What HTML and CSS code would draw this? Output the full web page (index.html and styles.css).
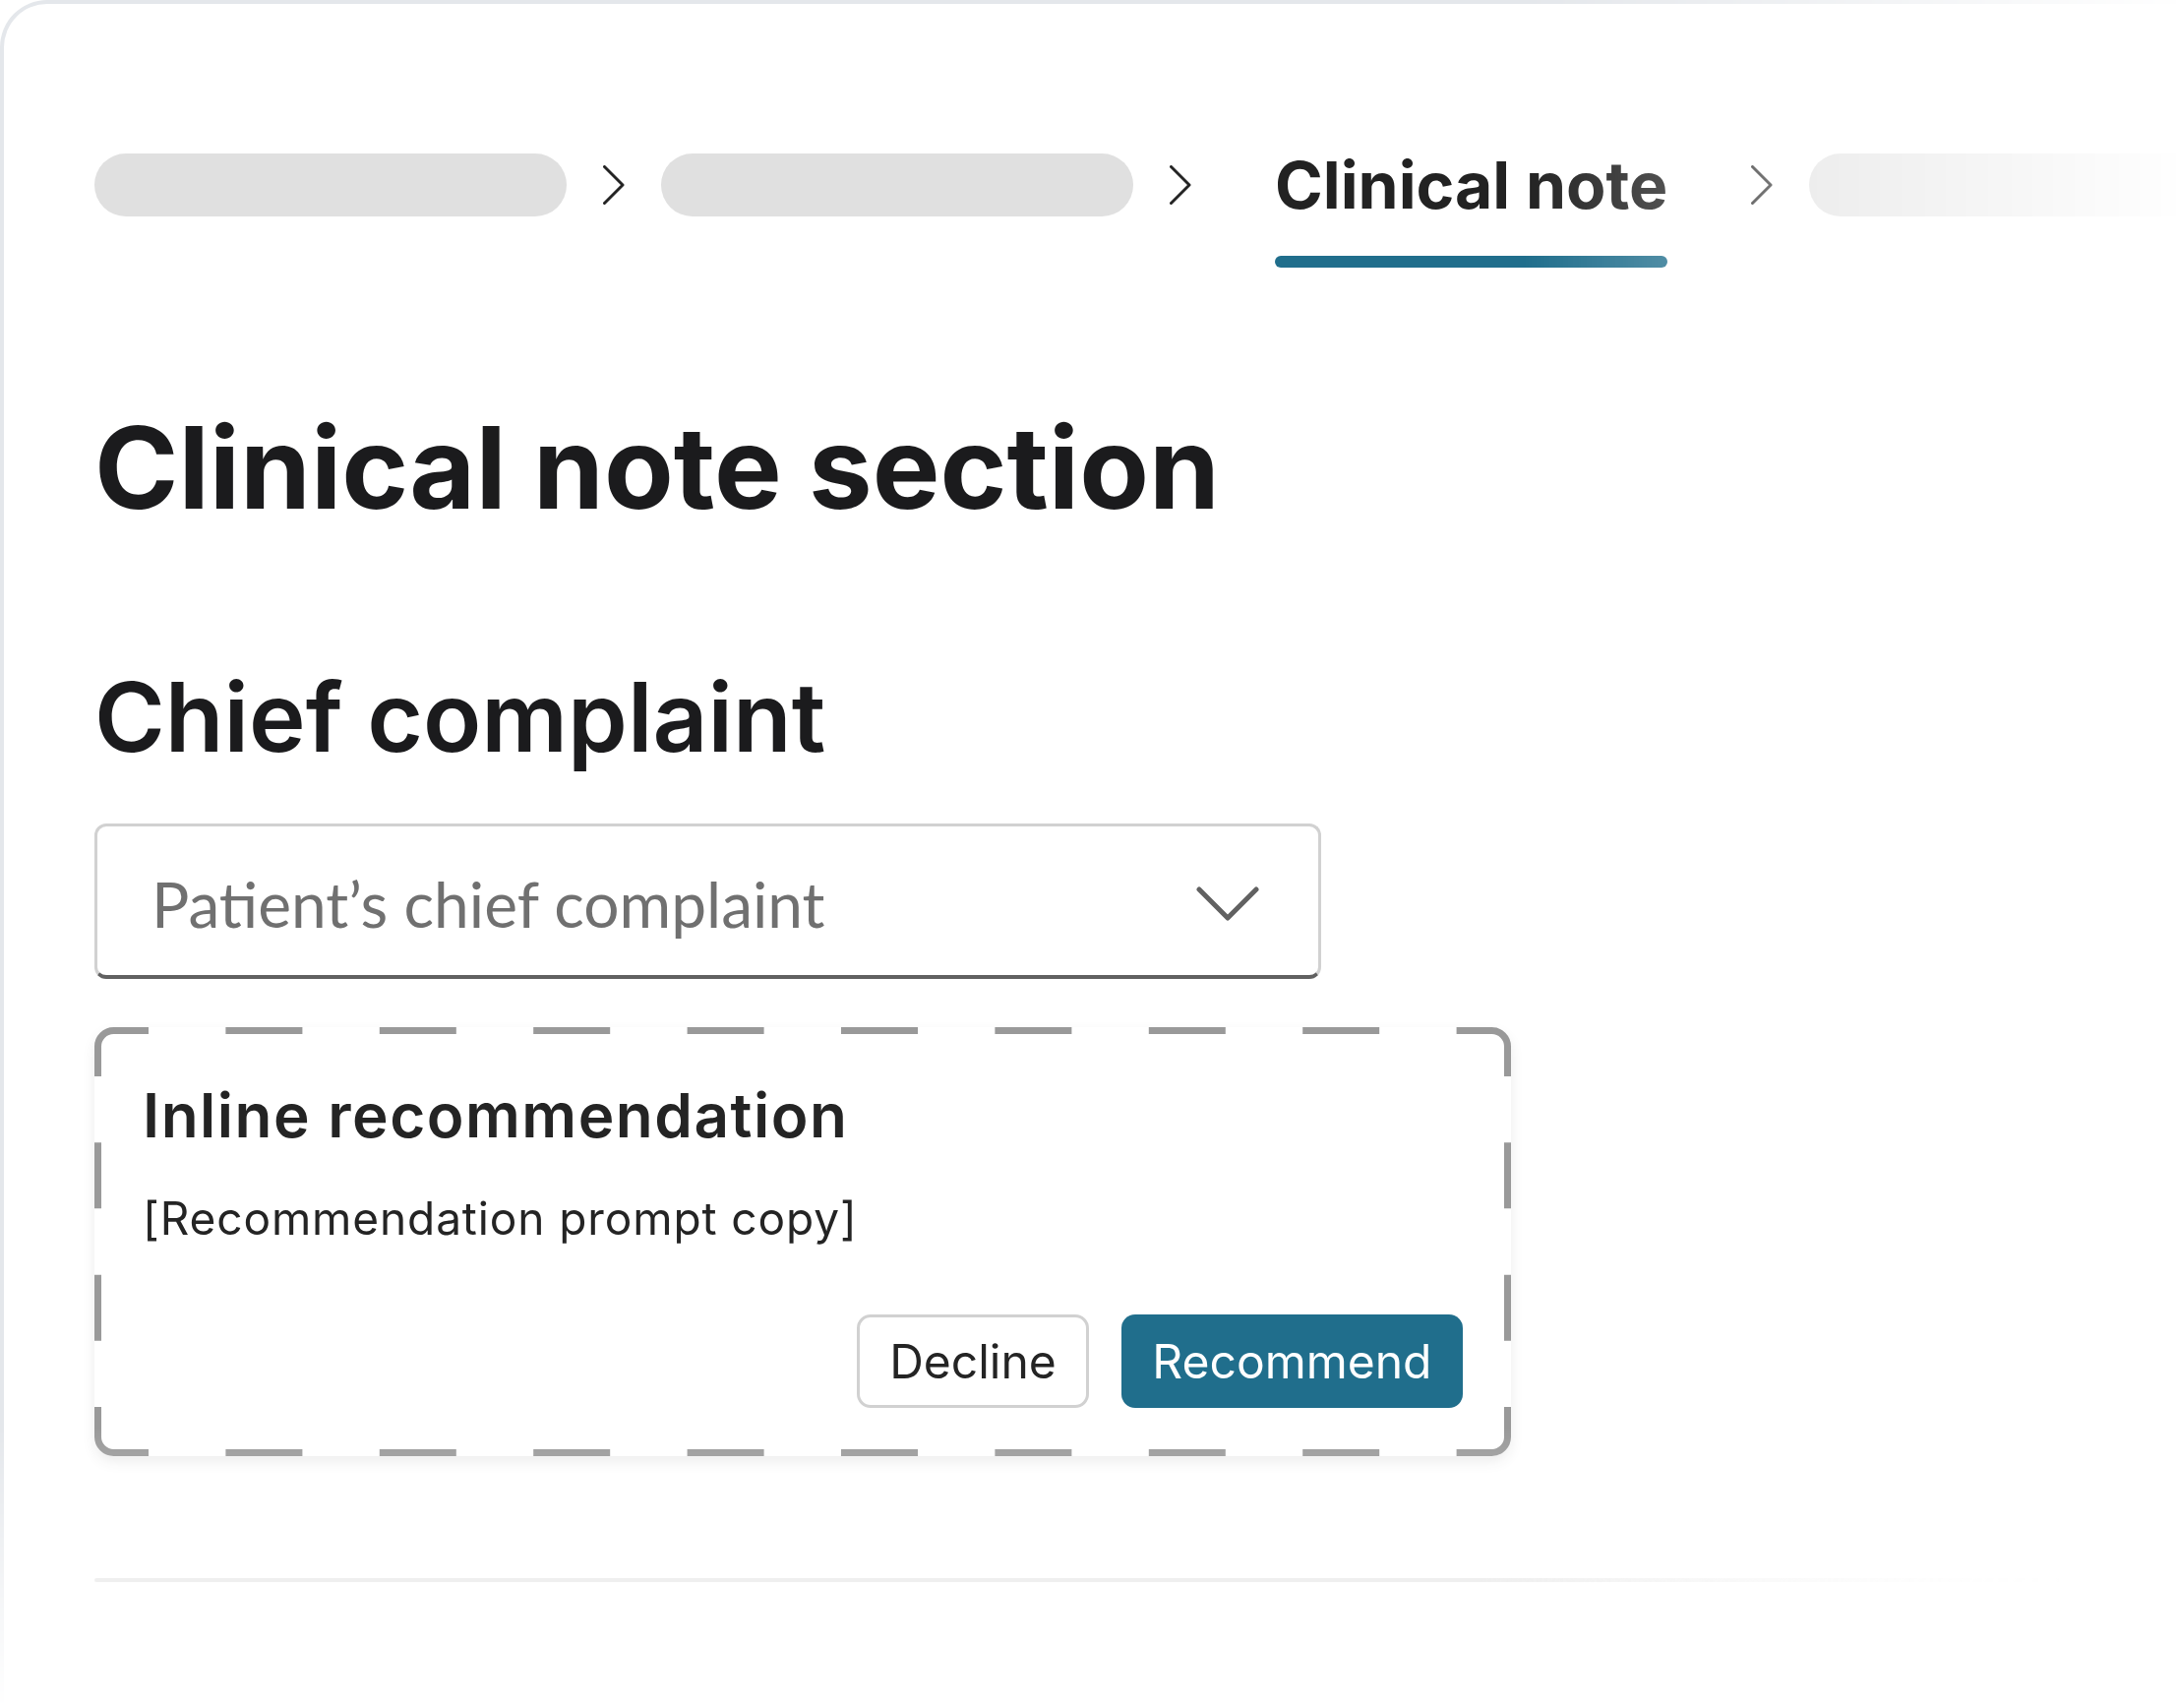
FILE: index.html
```html
<!DOCTYPE html>
<html lang="en">
<head>
<meta charset="utf-8">
<title>Clinical note</title>
<link rel="stylesheet" href="styles.css">
</head>
<body>
<div class="fade-x">
  <div class="fade-y">
    <main class="frame">
      <nav class="crumbs" aria-label="Breadcrumb">
        <span class="pill"></span>
        <svg class="chev" viewBox="0 0 22 40" aria-hidden="true"><path d="M1.5 1.5 L20 20 L1.5 38.5"/></svg>
        <span class="pill"></span>
        <svg class="chev" viewBox="0 0 22 40" aria-hidden="true"><path d="M1.5 1.5 L20 20 L1.5 38.5"/></svg>
        <div class="crumb-current">
          <span class="crumb-label">Clinical note</span>
          <span class="crumb-bar"></span>
        </div>
        <svg class="chev" viewBox="0 0 22 40" aria-hidden="true"><path d="M1.5 1.5 L20 20 L1.5 38.5"/></svg>
        <span class="pill"></span>
      </nav>

      <h1 class="title">Clinical note section</h1>
      <h2 class="subtitle">Chief complaint</h2>

      <div class="select">
        <span class="placeholder">Patient’s chief complaint</span>
        <svg class="select-chev" viewBox="0 0 64 36" aria-hidden="true"><path d="M3 3 L32 32 L61 3"/></svg>
      </div>

      <section class="reco">
        <svg class="reco-outline" width="1440" height="436" aria-hidden="true">
          <path d="M3.5 50 V19.5 A16 16 0 0 1 19.5 3.5 H55"/>
          <path d="M1385 3.5 H1420.5 A16 16 0 0 1 1436.5 19.5 V50"/>
          <path d="M1436.5 386 V416.5 A16 16 0 0 1 1420.5 432.5 H1385"/>
          <path d="M55 432.5 H19.5 A16 16 0 0 1 3.5 416.5 V386"/>
          <path class="dash-h" d="M55 3.5 H1385"/>
          <path class="dash-h" d="M55 432.5 H1385"/>
          <path class="dash-v" d="M3.5 50 V386"/>
          <path class="dash-v" d="M1436.5 50 V386"/>
        </svg>
        <h3 class="reco-title">Inline recommendation</h3>
        <p class="reco-copy">[Recommendation prompt copy]</p>
        <div class="reco-actions">
          <button class="btn btn-secondary" type="button">Decline</button>
          <button class="btn btn-primary" type="button">Recommend</button>
        </div>
      </section>

      <hr class="divider">
    </main>
  </div>
</div>
</body>
</html>
```
FILE: styles.css
```css
html, body {
  margin: 0;
  padding: 0;
  overflow: hidden;
  background: #ffffff;
}

body {
  width: 2212px;
  height: 1736px;
  font-family: Inter, "Liberation Sans", Arial, sans-serif;
  color: #1c1c1e;
}

.fade-x {
  width: 2212px;
  height: 1736px;
  overflow: hidden;
  -webkit-mask-image: linear-gradient(to right, #000 1550px, transparent 2230px);
  mask-image: linear-gradient(to right, #000 1550px, transparent 2230px);
}

.fade-y {
  height: 1736px;
  -webkit-mask-image: linear-gradient(to bottom, #000 1450px, transparent 1736px);
  mask-image: linear-gradient(to bottom, #000 1450px, transparent 1736px);
}

.frame {
  box-sizing: border-box;
  width: 2500px;
  height: 1900px;
  border-top: 4px solid #e4e7eb;
  border-left: 4px solid #e4e7eb;
  border-top-left-radius: 48px;
  padding: 152px 0 0 92px;
}

/* Breadcrumb */
.crumbs {
  display: flex;
  align-items: flex-start;
  gap: 37px;
}

.pill {
  flex: 0 0 480px;
  height: 64px;
  border-radius: 32px;
  background: #e0e0e0;
}

.chev {
  flex: none;
  width: 22px;
  height: 40px;
  margin-top: 12px;
  fill: none;
  stroke: #242424;
  stroke-width: 3;
  stroke-linecap: round;
  stroke-linejoin: round;
}

.crumb-current {
  flex: none;
  display: flex;
  flex-direction: column;
  margin: 0 48px;
}

.crumb-label {
  font-weight: 700;
  font-size: 66px;
  line-height: 64px;
  color: #222222;
  white-space: nowrap;
}

.crumb-bar {
  display: block;
  height: 12px;
  margin-top: 40px;
  border-radius: 6px;
  background: #206e8c;
}

/* Headings */
.title {
  margin: 133px 0 0;
  font-weight: 700;
  font-size: 115.5px;
  line-height: 140px;
  color: #1b1b1d;
  white-space: nowrap;
}

.subtitle {
  margin: 124px 0 0;
  font-weight: 600;
  font-size: 97.5px;
  line-height: 120px;
  color: #1b1b1d;
  white-space: nowrap;
}

/* Select */
.select {
  box-sizing: border-box;
  width: 1247px;
  height: 158px;
  margin-top: 48px;
  display: flex;
  align-items: center;
  justify-content: space-between;
  padding: 7px 60px 0 55px;
  border: 3px solid #d1d1d1;
  border-bottom: 4px solid #616161;
  border-radius: 12px;
  background: #ffffff;
}

.placeholder {
  font-family: Lato, "Open Sans", sans-serif;
  font-weight: 400;
  font-size: 64px;
  line-height: 80px;
  color: #707070;
  white-space: nowrap;
}

.select-chev {
  flex: none;
  width: 64px;
  height: 36px;
  fill: none;
  stroke: #616161;
  stroke-width: 5;
  stroke-linecap: round;
  stroke-linejoin: round;
}

/* Recommendation card */
.reco {
  position: relative;
  box-sizing: border-box;
  width: 1440px;
  height: 436px;
  margin-top: 49px;
  padding: 53px 49px 49px 49px;
  display: flex;
  flex-direction: column;
  border-radius: 20px;
  background: #ffffff;
  box-shadow: 0 6px 14px rgba(0, 0, 0, 0.08);
}

.reco-outline {
  position: absolute;
  left: 0;
  top: 0;
  overflow: visible;
  pointer-events: none;
  fill: none;
  stroke: #999999;
  stroke-width: 7;
}

.reco-outline .dash-h {
  stroke-dasharray: 78 78.4;
  stroke-dashoffset: 78;
}

.reco-outline .dash-v {
  stroke-dasharray: 67 67.33;
  stroke-dashoffset: 67;
}

.reco-title {
  margin: 0;
  font-weight: 600;
  font-size: 62px;
  line-height: 74px;
  letter-spacing: 1.5px;
  color: #242424;
  white-space: nowrap;
}

.reco-copy {
  margin: 39px 0 0;
  font-weight: 400;
  font-size: 46px;
  line-height: 56px;
  letter-spacing: 0.9px;
  color: #242424;
  white-space: nowrap;
}

.reco-actions {
  margin-top: auto;
  display: flex;
  justify-content: flex-end;
  gap: 33px;
}

.btn {
  box-sizing: border-box;
  height: 95px;
  border-radius: 14px;
  font-family: Inter, "Liberation Sans", sans-serif;
  font-weight: 400;
  font-size: 48px;
  line-height: 1;
}

.btn-secondary {
  padding: 0 30px;
  border: 3px solid #d1d1d1;
  background: #ffffff;
  color: #242424;
}

.btn-primary {
  padding: 0 31.5px;
  border: 0;
  background: #206e8c;
  color: #ffffff;
}

.divider {
  width: 2010px;
  height: 4px;
  margin: 124px 0 0;
  border: 0;
  border-radius: 2px;
  background: linear-gradient(to right, #dcdcdc 70%, rgba(220, 220, 220, 0));
}
```
